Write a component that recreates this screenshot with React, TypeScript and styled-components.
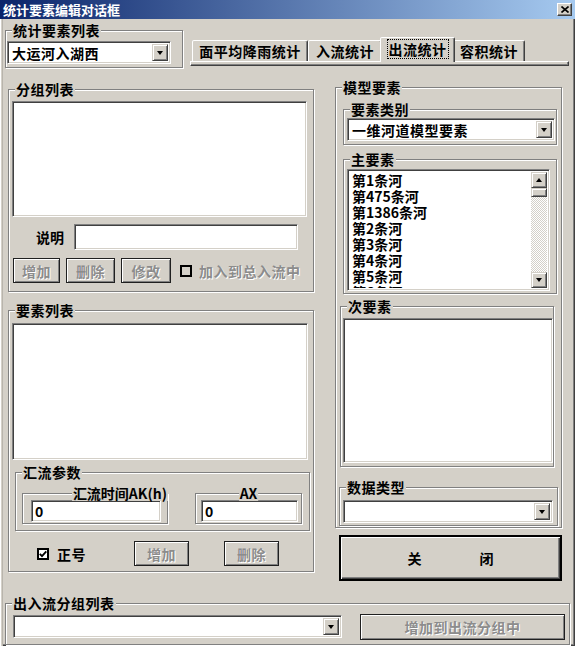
import React from 'react';
import styled, { createGlobalStyle, css } from 'styled-components';

const GlobalStyle = createGlobalStyle`
  html, body {
    margin: 0;
    padding: 0;
    background: #d4d0c8;
  }
`;

const mainItems = ['第1条河', '第475条河', '第1386条河', '第2条河', '第3条河', '第4条河', '第5条河', '第6条河'];

const App = () => {
  return (
    <Window>
      <GlobalStyle />
      <TitleBar>
        <span>统计要素编辑对话框</span>
        <CloseButton>
          <svg width="8" height="7" viewBox="0 0 8 7">
            <path d="M0.5 0.5 L7.5 6.5 M7.5 0.5 L0.5 6.5" stroke="#000" strokeWidth="1.6" />
          </svg>
        </CloseButton>
      </TitleBar>

      <TopRow>
        <Group $w={178} $h={38} $pad="10px 0 0 1px" $mt={11}>
          <Caption>统计要素列表</Caption>
          <Combo $w={164} value="大运河入湖西" />
        </Group>
        <TabArea>
          <TabRow>
            <Tab $w={116}>面平均降雨统计</Tab>
            <Tab $w={74}>入流统计</Tab>
            <Tab $w={71} $active>
              <FocusText>出流统计</FocusText>
            </Tab>
            <Tab $w={72}>容积统计</Tab>
          </TabRow>
          <TabBase />
        </TabArea>
      </TopRow>

      <MainArea>
        <LeftCol>
          <Group $w={306} $h={203} $pad="11px 0 0 3px">
            <Caption>分组列表</Caption>
            <ListBox $w={295} $h={116} />
            <NoteRow>
              <FieldLabel>说明</FieldLabel>
              <TextBox $w={224} $h={26} />
            </NoteRow>
            <ButtonRow>
              <Button $w={47} $h={25} disabled>增加</Button>
              <Button $w={49} $h={25} disabled>删除</Button>
              <Button $w={50} $h={25} disabled>修改</Button>
              <CheckBox />
              <CheckLabel $disabled>加入到总入流中</CheckLabel>
            </ButtonRow>
          </Group>

          <Group $w={306} $h={262} $pad="12px 0 0 3px" $mt={18}>
            <Caption>要素列表</Caption>
            <ListBox $w={296} $h={137} />
            <Group $w={295} $h={59} $pad="20px 0 0 6px" $mt={12} $ml={3} $row>
              <Caption>汇流参数</Caption>
              <Group $w={146} $h={31} $pad="6px 0 0 8px">
                <Caption $align="right">汇流时间AK(h)</Caption>
                <TextBox $w={130} $h={22} defaultValue="0" />
              </Group>
              <Group $w={107} $h={31} $pad="6px 0 0 5px" $ml={27}>
                <Caption $align="center">AX</Caption>
                <TextBox $w={97} $h={22} defaultValue="0" />
              </Group>
            </Group>
            <SignRow>
              <CheckBox $checked>
                <svg width="8" height="8" viewBox="0 0 8 8">
                  <path d="M0.8 3.8 L3 6.2 L7.3 1.3" stroke="#000" strokeWidth="1.8" fill="none" />
                </svg>
              </CheckBox>
              <CheckLabel>正号</CheckLabel>
              <Button $w={55} $h={25} $ml={48} disabled>增加</Button>
              <Button $w={55} $h={25} $ml={35} disabled>删除</Button>
            </SignRow>
          </Group>
        </LeftCol>

        <RightCol>
          <Group $w={227} $h={441} $pad="21px 0 0 7px">
            <Caption>模型要素</Caption>
            <Group $w={214} $h={36} $pad="8px 0 0 3px">
              <Caption>要素类别</Caption>
              <Combo $w={208} value="一维河道模型要素" />
            </Group>
            <Group $w={214} $h={135} $pad="9px 0 0 3px" $mt={14}>
              <Caption>主要素</Caption>
              <ListBox $w={203} $h={122} $row>
                <Items>
                  {mainItems.map((it) => (
                    <Item key={it}>{it}</Item>
                  ))}
                </Items>
                <ScrollBar>
                  <ScrollButton $dir="up" />
                  <Thumb />
                  <Track />
                  <ScrollButton $dir="down" />
                </ScrollBar>
              </ListBox>
            </Group>
            <Group $w={214} $h={161} $pad="11px 0 0 2px" $mt={12} $ml={-3}>
              <Caption>次要素</Caption>
              <ListBox $w={210} $h={145} />
            </Group>
            <Group $w={219} $h={39} $pad="12px 0 0 3px" $mt={20} $ml={-4}>
              <Caption>数据类型</Caption>
              <Combo $w={210} value="" />
            </Group>
          </Group>
          <CloseBig>
            <span>关</span>
            <span>闭</span>
          </CloseBig>
        </RightCol>
      </MainArea>

      <Group $w={565} $h={42} $pad="11px 0 0 7px" $mt={22} $ml={5} $row>
        <Caption>出入流分组列表</Caption>
        <Combo $w={329} value="" />
        <Button $w={205} $h={26} $ml={18} $mt={-1} disabled>增加到出流分组中</Button>
      </Group>
    </Window>
  );
};

const Combo = ({ $w, value }: { $w: number; value: string }) => (
  <ComboBox $w={$w}>
    <ComboText>{value}</ComboText>
    <DropButton />
  </ComboBox>
);

export default App;

const FACE = '#d4d0c8';

const Window = styled.div`
  width: 575px;
  height: 646px;
  box-sizing: border-box;
  background: ${FACE};
  display: flex;
  flex-direction: column;
  overflow: hidden;
  box-shadow: inset 1px 0 0 #fff, inset 2px 0 0 ${FACE}, inset 3px 0 0 #b8b4ac, inset -1px -1px 0 #404040,
    inset -2px -2px 0 #808080;
  font-family: 'Noto Sans CJK SC', 'Liberation Sans', sans-serif;
  font-weight: 700;
  font-size: 14px;
  line-height: 16px;
  color: #000;
`;

//타이틀 바
const TitleBar = styled.div`
  height: 19px;
  flex: none;
  display: flex;
  align-items: center;
  justify-content: space-between;
  padding: 0 3px 0 3px;
  background: linear-gradient(to right, #0a246a, #a6caf0);
  color: #fff;
  font-size: 13px;
  line-height: 19px;
`;
const CloseButton = styled.span`
  width: 15px;
  height: 13px;
  box-sizing: border-box;
  background: ${FACE};
  border: 1px solid;
  border-color: #fff #404040 #404040 #fff;
  box-shadow: inset -1px -1px 0 #808080;
  display: flex;
  align-items: center;
  justify-content: center;
`;

//상단
const TopRow = styled.div`
  display: flex;
  align-items: flex-start;
  padding-left: 5px;
  height: 49px;
  flex: none;
`;
const TabArea = styled.div`
  display: flex;
  flex-direction: column;
  width: 379px;
  margin: 16px 0 0 7px;
`;
const TabRow = styled.div`
  display: flex;
  align-items: flex-end;
  height: 26px;
  padding-left: 2px;
`;
const Tab = styled.div<{ $w: number; $active?: boolean }>`
  box-sizing: border-box;
  width: ${(p) => p.$w}px;
  height: 21px;
  display: flex;
  align-items: center;
  justify-content: center;
  background: ${FACE};
  border: 1px solid;
  border-bottom: none;
  border-color: #fff #404040 transparent #fff;
  box-shadow: inset -1px 0 0 #808080;
  border-radius: 2px 2px 0 0;
  letter-spacing: 0.5px;
  ${(p) =>
    p.$active &&
    css`
      width: ${p.$w + 4}px;
      height: 25px;
      margin: 0 -2px -1px;
      padding-bottom: 2px;
      position: relative;
      z-index: 1;
    `}
`;
const FocusText = styled.span`
  outline: 1px dotted #000;
  outline-offset: 1px;
`;
const TabBase = styled.div`
  height: 5px;
  box-sizing: border-box;
  border-top: 1px solid #fff;
  border-left: 1px solid #fff;
  border-right: 1px solid #404040;
  border-bottom: 1px solid #404040;
  box-shadow: inset -1px -1px 0 #808080;
`;

//본문
const MainArea = styled.div`
  display: flex;
  align-items: flex-start;
  padding-left: 8px;
  flex: none;
`;
const LeftCol = styled.div`
  display: flex;
  flex-direction: column;
  width: 306px;
  padding-top: 21px;
`;
const RightCol = styled.div`
  display: flex;
  flex-direction: column;
  width: 227px;
  margin-left: 21px;
  padding-top: 19px;
`;

const Group = styled.div<{ $w: number; $h: number; $pad: string; $mt?: number; $ml?: number; $row?: boolean }>`
  position: relative;
  box-sizing: border-box;
  flex: none;
  width: ${(p) => p.$w}px;
  height: ${(p) => p.$h}px;
  margin-top: ${(p) => p.$mt ?? 0}px;
  margin-left: ${(p) => p.$ml ?? 0}px;
  padding: ${(p) => p.$pad};
  border: 1px solid #808080;
  box-shadow: inset 1px 1px 0 #fff, 1px 1px 0 #fff;
  display: flex;
  flex-direction: ${(p) => (p.$row ? 'row' : 'column')};
  align-items: flex-start;
`;
const Caption = styled.span<{ $align?: 'left' | 'center' | 'right' }>`
  position: absolute;
  top: -9px;
  padding: 0 1px;
  background: ${FACE};
  white-space: nowrap;
  letter-spacing: 0.5px;
  ${(p) =>
    p.$align === 'right'
      ? 'right: -1px; letter-spacing: 0;'
      : p.$align === 'center'
      ? 'left: 50%; transform: translateX(-50%); letter-spacing: 0;'
      : 'left: 6px;'}
`;

const sunken = css`
  box-sizing: border-box;
  border: 1px solid;
  border-color: #808080 #fff #fff #808080;
  box-shadow: inset 1px 1px 0 #404040, inset -1px -1px 0 ${FACE};
  background: #fff;
`;

const ListBox = styled.div<{ $w: number; $h: number; $row?: boolean }>`
  ${sunken};
  flex: none;
  width: ${(p) => p.$w}px;
  height: ${(p) => p.$h}px;
  padding: 2px;
  display: flex;
  overflow: hidden;
`;
const Items = styled.div`
  flex: 1;
  overflow: hidden;
  padding-left: 2px;
`;
const Item = styled.div`
  height: 16px;
  white-space: nowrap;
`;
const ScrollBar = styled.div`
  width: 16px;
  flex: none;
  display: flex;
  flex-direction: column;
`;
const raised = css`
  box-sizing: border-box;
  background: ${FACE};
  border: 1px solid;
  border-color: ${FACE} #404040 #404040 ${FACE};
  box-shadow: inset 1px 1px 0 #fff, inset -1px -1px 0 #808080;
`;
const ScrollButton = styled.div<{ $dir: 'up' | 'down' }>`
  ${raised};
  height: 16px;
  flex: none;
  display: flex;
  align-items: center;
  justify-content: center;
  &::after {
    content: '';
    border-left: 3.5px solid transparent;
    border-right: 3.5px solid transparent;
    ${(p) => (p.$dir === 'up' ? 'border-bottom: 4px solid #000;' : 'border-top: 4px solid #000;')}
  }
`;
const Thumb = styled.div`
  ${raised};
  height: 9px;
  flex: none;
`;
const Track = styled.div`
  flex: 1;
  background-color: ${FACE};
  background-image: repeating-conic-gradient(#fff 0 25%, ${FACE} 0 50%);
  background-size: 2px 2px;
`;

const TextBox = styled.input<{ $w: number; $h: number }>`
  ${sunken};
  width: ${(p) => p.$w}px;
  height: ${(p) => p.$h}px;
  padding: 0 0 0 3px;
  margin: 0;
  font: inherit;
  color: #000;
  outline: none;
`;

const ComboBox = styled.div<{ $w: number }>`
  ${sunken};
  flex: none;
  width: ${(p) => p.$w}px;
  height: 23px;
  padding: 2px;
  display: flex;
  align-items: stretch;
`;
const ComboText = styled.span`
  flex: 1;
  padding-left: 2px;
  line-height: 19px;
  white-space: nowrap;
  letter-spacing: 0.5px;
  overflow: hidden;
`;
const DropButton = styled.span`
  ${raised};
  width: 16px;
  flex: none;
  display: flex;
  align-items: center;
  justify-content: center;
  &::after {
    content: '';
    border-left: 3.5px solid transparent;
    border-right: 3.5px solid transparent;
    border-top: 4px solid #000;
  }
`;

const NoteRow = styled.div`
  display: flex;
  align-items: center;
  margin-top: 7px;
  padding-left: 24px;
`;
const FieldLabel = styled.span`
  width: 28px;
  margin-right: 10px;
`;
const ButtonRow = styled.div`
  display: flex;
  align-items: center;
  gap: 6px;
  margin-top: 8px;
  padding-left: 1px;
`;
const SignRow = styled.div`
  display: flex;
  align-items: center;
  margin-top: 10px;
  padding-left: 25px;
`;

const Button = styled.button<{ $w: number; $h: number; $ml?: number; $mt?: number }>`
  box-sizing: border-box;
  flex: none;
  width: ${(p) => p.$w}px;
  height: ${(p) => p.$h}px;
  margin: ${(p) => p.$mt ?? 0}px 0 0 ${(p) => p.$ml ?? 0}px;
  padding: 0;
  background: ${FACE};
  border: 1px solid #202020;
  box-shadow: inset 1px 1px 0 #fff, inset -1px -1px 0 #808080;
  font: inherit;
  letter-spacing: 0.5px;
  color: #000;
  &:disabled {
    color: #8c8c8c;
    text-shadow: 1px 1px 0 #fff;
  }
`;

const CheckBox = styled.span<{ $checked?: boolean }>`
  box-sizing: border-box;
  width: 12px;
  height: 12px;
  flex: none;
  margin-left: ${(p) => (p.$checked ? 0 : 3)}px;
  border: 2px solid #000;
  background: ${(p) => (p.$checked ? '#fff' : FACE)};
  display: flex;
  align-items: center;
  justify-content: center;
`;
const CheckLabel = styled.span<{ $disabled?: boolean }>`
  margin-left: ${(p) => (p.$disabled ? 1 : 8)}px;
  white-space: nowrap;
  letter-spacing: 0.5px;
  ${(p) =>
    p.$disabled &&
    css`
      color: #8c8c8c;
      text-shadow: 1px 1px 0 #fff;
    `}
`;

const CloseBig = styled.div`
  box-sizing: border-box;
  width: 223px;
  height: 46px;
  margin: 7px 0 0 4px;
  border: 2px solid #000;
  background: ${FACE};
  box-shadow: inset 1px 1px 0 #fff, inset -1px -1px 0 #404040, inset -2px -2px 0 #808080;
  display: flex;
  align-items: center;
  justify-content: center;
  gap: 58px;
`;
